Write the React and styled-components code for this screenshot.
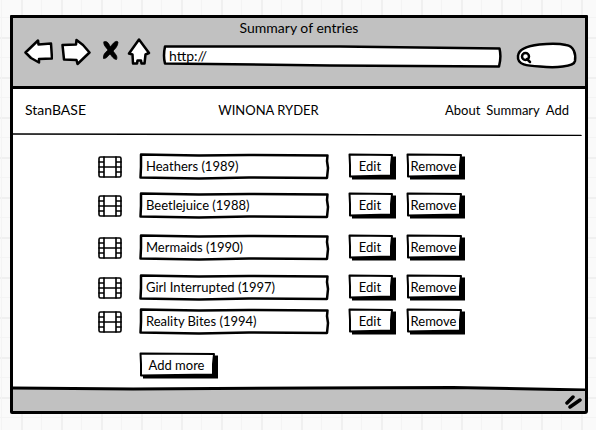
import React from "react";
import styled, { createGlobalStyle } from "styled-components";

const GlobalStyle = createGlobalStyle`
  * { box-sizing: border-box; }
  body {
    margin: 0;
    padding: 15px 8px 17px 10px;
    color: #000;
    font: 13px/20px Lato, "Open Sans", sans-serif;
    background-color: #fafafa;
    background-image:
      repeating-linear-gradient(90deg, #f0f0f0 0 2px, transparent 2px 20px, #f4f4f4 20px 21px, transparent 21px 40px),
      repeating-linear-gradient(180deg, #f0f0f0 0 2px, transparent 2px 20px, #f4f4f4 20px 21px, transparent 21px 40px);
    background-size: 40px 40px;
    background-position: 21px 0, 0 37px;
  }
  button, input { font: inherit; color: inherit; }
`;

const BrowserWindow = styled.div`
  border: 3px solid #000;
  border-radius: 1px 1px 3px 2px;
  background: #fff;
`;

const Chrome = styled.header`
  padding-bottom: 18px;
  font-size: 14px;
  background: #c1c1c1;
  border-bottom: 3px solid #000;
`;

const WindowTitle = styled.h1`
  margin: 0;
  font: inherit;
  text-align: center;
`;

const Toolbar = styled.div`
  display: flex;
  align-items: flex-end;
  height: 30px;
  padding: 0 9px 0 10px;
`;

const IconButton = styled.button`
  flex: none;
  display: flex;
  margin: 0 ${(p) => p.$after}px 0 0;
  padding: 0;
  border: 0;
  background: none;
`;

const Ink = styled.svg`
  display: block;
  fill: #fff;
  stroke: #000;
  stroke-width: 2.5;
  stroke-linejoin: round;
  stroke-linecap: round;
`;

const Outline = styled(Ink)`
  position: absolute;
  inset: 0;
  width: 100%;
  height: 100%;
  overflow: visible;
  pointer-events: none;
`;

const Field = styled.label`
  position: relative;
  flex: ${(p) => (p.$width ? "none" : "1")};
  width: ${(p) => (p.$width ? `${p.$width}px` : "auto")};
  min-width: 0;
  height: ${(p) => p.$height}px;
  margin-right: ${(p) => p.$after || 0}px;
`;

const TextInput = styled.input`
  position: relative;
  display: block;
  width: 100%;
  height: 100%;
  padding: 0 6px ${(p) => p.$lift || 0}px ${(p) => p.$indent || 6}px;
  border: 0;
  outline: 0;
  background: transparent;
`;

const Nav = styled.nav`
  display: flex;
  align-items: center;
  justify-content: space-between;
  height: 44px;
  padding: 0 16px 2px 12px;
`;

const NavLink = styled.a`
  color: inherit;
  text-decoration: none;
`;

const Brand = styled(NavLink)`
  padding-right: 6px;
  font-size: 14px;
`;

const NavLinks = styled.div`
  display: flex;
  gap: 6px;
`;

const Rule = styled(Ink)`
  width: 100%;
  height: ${(p) => p.$height}px;
  fill: none;
`;

const Main = styled.main`
  padding: 17px 120px 7px 85px;
`;

const Entries = styled.ul`
  margin: 0;
  padding: 0;
  list-style: none;
`;

const Entry = styled.li`
  display: flex;
  align-items: center;
  margin-bottom: ${(p) => p.$after}px;
`;

const FilmIcon = styled(Ink)`
  flex: none;
  margin-right: 17px;
  fill: none;
  stroke-width: 1.6;
`;

const SketchButton = styled.button`
  position: relative;
  flex: none;
  width: ${(p) => p.$width}px;
  height: 27px;
  margin-left: ${(p) => p.$before}px;
  padding: 0 4px 2px 0;
  border: 0;
  background: none;
  text-align: center;
  white-space: nowrap;
`;

const ButtonText = styled.span`
  position: relative;
`;

const FooterEdge = styled.div`
  background: #c1c1c1;
`;

const Footer = styled.footer`
  display: flex;
  justify-content: flex-end;
  height: 20px;
  padding: 3px 3px 0 0;
  background: #c1c1c1;
`;

const entries = [
  { title: "Heathers (1989)", after: 12 },
  { title: "Beetlejuice (1988)", after: 15 },
  { title: "Mermaids (1990)", after: 13 },
  { title: "Girl Interrupted (1997)", after: 7 },
  { title: "Reality Bites (1994)", after: 17 },
];

function Film() {
  return (
    <FilmIcon width="24" height="22" viewBox="0 0 24 22" aria-hidden="true">
      <rect x="1" y="1" width="22" height="20" rx="1.5" />
      <path d="M6 1V21M18 1V21M6 11H18M1 6H6M1 11H6M1 16H6M18 6H23M18 11H23M18 16H23" />
    </FilmIcon>
  );
}

function Button({ width, before = 0, children, label }) {
  const right = width - 4;
  return (
    <SketchButton type="button" $width={width} $before={before} aria-label={label}>
      <Outline viewBox={`0 0 ${width} 27`} preserveAspectRatio="none" aria-hidden="true">
        <path d={`M4 4L${width} 3.5V26.5H4Z`} fill="#000" stroke="none" />
        <path d={`M1.5 1.5L${right} 2L${right - 1} 12L${right - 1} 22.5L2 23.5L2 12Z`} strokeWidth="2" />
      </Outline>
      <ButtonText>{children}</ButtonText>
    </SketchButton>
  );
}

export default function App() {
  return (
    <>
      <GlobalStyle />
      <BrowserWindow>
        <Chrome>
          <WindowTitle>Summary of entries</WindowTitle>
          <Toolbar>
            <IconButton type="button" aria-label="Back" $after={8}>
              <Ink width="30" height="30" viewBox="23 38 30 30">
                <path d="M25.5 52.5L38 40.5L38.5 44.5L51 43.5L52 58.5L39 59L39 62.5L31 58Z" />
              </Ink>
            </IconButton>
            <IconButton type="button" aria-label="Forward" $after={11}>
              <Ink width="30" height="30" viewBox="61 38 30 30">
                <path d="M62.5 45L76 44.5L76.5 40L83 45L89.5 52.5L77.5 64L76.5 60L64 59.5Z" />
              </Ink>
            </IconButton>
            <IconButton type="button" aria-label="Stop" $after={7}>
              <Ink width="18" height="30" viewBox="102 38 18 30">
                <path
                  d="M104 42C107 40 109 44 110.500 47C113 43 116 40 118 42C118 46 115 49 113 51C115 54 118 56 116.500 59.500C113 59 112 56 110 54C108 56 106 59 103.500 58.500C103 54 106 52 108 50C106 47 103 45 104 42Z"
                  fill="#000"
                  strokeWidth="0.8"
                />
              </Ink>
            </IconButton>
            <IconButton type="button" aria-label="Home" $after={12}>
              <Ink width="24" height="30" viewBox="127 38 24 30">
                <path d="M139 39.500L149 53L145.500 54.500L144.500 63.500L141.500 63.500L141 60.500L137.500 60.500L137 63.500L133 63.500L132.500 54.500L129 53.500Z" />
              </Ink>
            </IconButton>
            <Field $height={22} $after={15}>
              <Outline viewBox="163 46 338 22" preserveAspectRatio="none" aria-hidden="true">
                <path d="M165 46.500L340 46.500L499.500 48.500Q501.500 57 499 66.500L330 65.500L165 63.500Q163 56 165 46.500Z" />
              </Outline>
              <TextInput aria-label="Address" defaultValue="http://" $lift={3} />
            </Field>
            <Field $width={60} $height={25}>
              <Outline viewBox="516 43 60 25" preserveAspectRatio="none" aria-hidden="true">
                <path d="M518 56C519 42 558 43 566 45C574 46 576 54 575 61C574 67 555 68 540 66.500C527 66 517 65 518 56Z" />
                <circle cx="525.500" cy="56.500" r="3.500" />
                <path d="M527 59L530 62" />
              </Outline>
              <TextInput aria-label="Search" $indent={18} />
            </Field>
          </Toolbar>
        </Chrome>
        <Nav>
          <Brand href="#home">StanBASE</Brand>
          <span>WINONA RYDER</span>
          <NavLinks>
            <NavLink href="#about">About</NavLink>
            <NavLink href="#summary">Summary</NavLink>
            <NavLink href="#add">Add</NavLink>
          </NavLinks>
        </Nav>
        <Rule $height={3} viewBox="0 0 572 3" preserveAspectRatio="none" aria-hidden="true">
          <path d="M0 1L280 1.500L568 2.500" strokeWidth="1.500" />
        </Rule>
        <Main>
          <Entries>
            {entries.map(({ title, after }) => (
              <Entry key={title} $after={after}>
                <Film />
                <Field $height={27}>
                  <Outline viewBox="0 0 190 27" preserveAspectRatio="none" aria-hidden="true">
                    <path d="M2 1.500L60 2.500L110 2L188.500 2.500L188 8L189 15L188 25L110 24.500L60 25.500L1.500 24.500L2 14Z" />
                  </Outline>
                  <TextInput aria-label="Entry title" defaultValue={title} $lift={2} $indent={7} />
                </Field>
                <Button width={48} before={19} label={`Edit ${title}`}>Edit</Button>
                <Button width={59} before={10} label={`Remove ${title}`}>Remove</Button>
              </Entry>
            ))}
          </Entries>
          <Button width={79} before={41}>Add more</Button>
        </Main>
        <FooterEdge>
          <Rule $height={5} viewBox="0 0 572 5" preserveAspectRatio="none" aria-hidden="true">
            <path d="M0 0V2L120 3L300 2L440 1.500L572 4V0Z" fill="#fff" stroke="none" />
            <path d="M0 2L120 3L300 2L440 1.500L572 4" strokeWidth="3" />
          </Rule>
        </FooterEdge>
        <Footer>
          <Ink width="18" height="16" viewBox="566 394 18 16" aria-hidden="true">
            <path d="M569 403L575 397M572 407L582 400" strokeWidth="3.5" />
          </Ink>
        </Footer>
      </BrowserWindow>
    </>
  );
}
